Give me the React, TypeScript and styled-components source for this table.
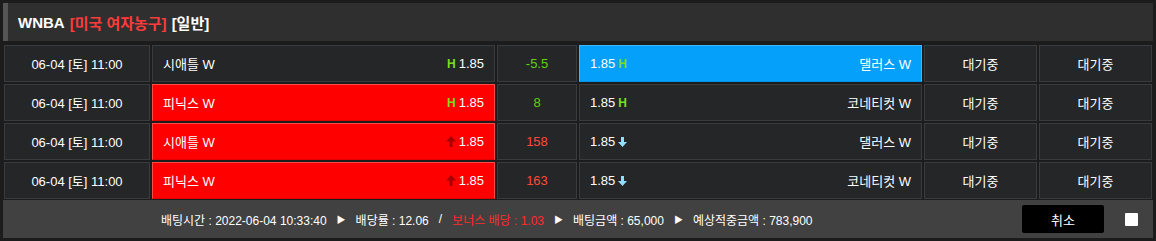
import styled, { createGlobalStyle } from "styled-components";
import { ReactElement } from "react";

const GlobalStyle = createGlobalStyle`
  html, body {
    margin: 0;
    padding: 0;
    background: #1c1c1c;
    font-family: "Liberation Sans", "Noto Sans CJK KR", sans-serif;
    font-size: 13px;
    color: #fff;
  }
`;

const Wrap = styled.div`
  width: 1150px;
  padding: 3px;
`;

const Header = styled.div`
  height: 38px;
  background: #2f2f2f;
  border-left: 5px solid #555;
  box-sizing: border-box;
  display: flex;
  align-items: center;
  padding-left: 10px;
  font-size: 15px;
  font-weight: 700;
  gap: 5px;

  .red {
    color: #ff3b3b;
  }
`;

const Table = styled.div`
  margin-top: 4px;
  padding-left: 1px;
  display: flex;
  flex-direction: column;
  gap: 2px;
`;

const Row = styled.div`
  display: grid;
  grid-template-columns: 146px 343px 80px 343px 113px 113px;
  gap: 2px;
  height: 37px;
`;

type Tone = "none" | "red" | "blue";

const Cell = styled.div<{ $tone?: Tone }>`
  box-sizing: border-box;
  display: flex;
  align-items: center;
  justify-content: center;
  padding: 0 10px;
  border: 1px solid
    ${(p) => (p.$tone === "red" ? "#ff4a4a" : p.$tone === "blue" ? "#3fb6ff" : "#3a3b3d")};
  border-bottom-color: ${(p) => (p.$tone === "red" ? "#e00000" : p.$tone === "blue" ? "#0494e6" : "#3a3b3d")};
  background: ${(p) => (p.$tone === "red" ? "#ff0000" : p.$tone === "blue" ? "#05a0fa" : "#252628")};
  color: #fff;
  white-space: nowrap;
`;

const TeamCell = styled(Cell)`
  justify-content: space-between;
`;

const Odds = styled.span`
  display: inline-flex;
  align-items: center;
  gap: 3px;
`;

const HMark = styled.span`
  color: #7ddc1f;
  font-weight: 700;
  font-size: 12px;
`;

const Line = styled.span<{ $color: string }>`
  color: ${(p) => p.$color};
`;

const Footer = styled.div`
  margin-top: 1px;
  height: 38px;
  background: #414141;
  display: flex;
  align-items: center;
  padding-left: 158px;
  padding-right: 15px;
  white-space: nowrap;
  font-size: 12px;
`;

const Info = styled.span<{ $red?: boolean }>`
  color: ${(p) => (p.$red ? "#ff2a2a" : "#fff")};
`;

const Sep = styled.span<{ $small?: boolean }>`
  display: inline-block;
  margin: 0 10px;
  font-size: ${(p) => (p.$small ? "9px" : "12px")};
`;

const CancelButton = styled.button`
  margin-left: auto;
  width: 82px;
  height: 28px;
  background: #000;
  border: none;
  border-radius: 2px;
  color: #fff;
  font-family: inherit;
  font-size: 13px;
  cursor: pointer;
`;

const Check = styled.span`
  margin-left: 21px;
  width: 13px;
  height: 13px;
  background: #fff;
  border-radius: 1px;
`;

const UpArrow = (): ReactElement => (
  <svg width="10" height="11" viewBox="0 0 10 11">
    <path d="M5 0 L10 5.5 L6.5 5.5 L6.5 11 L3.5 11 L3.5 5.5 L0 5.5 Z" fill="#a80000" />
  </svg>
);

const DownArrow = (): ReactElement => (
  <svg width="9" height="10" viewBox="0 0 9 10">
    <path d="M3 0 L6 0 L6 5 L9 5 L4.5 10 L0 5 L3 5 Z" fill="#8ee0ff" />
  </svg>
);

type Mark = "h" | "up" | "down";

interface Game {
  home: string;
  away: string;
  line: string;
  lineColor: string;
  mark: Mark;
  pick: "home" | "away";
}

const games: Game[] = [
  { home: "시애틀 W", away: "댈러스 W", line: "-5.5", lineColor: "#5fd40c", mark: "h", pick: "away" },
  { home: "피닉스 W", away: "코네티컷 W", line: "8", lineColor: "#5fd40c", mark: "h", pick: "home" },
  { home: "시애틀 W", away: "댈러스 W", line: "158", lineColor: "#ff4a3a", mark: "up", pick: "home" },
  { home: "피닉스 W", away: "코네티컷 W", line: "163", lineColor: "#ff4a3a", mark: "up", pick: "home" },
];

const HomeMark = ({ mark }: { mark: Mark }): ReactElement =>
  mark === "h" ? <HMark>H</HMark> : <UpArrow />;

const AwayMark = ({ mark }: { mark: Mark }): ReactElement =>
  mark === "h" ? <HMark>H</HMark> : <DownArrow />;

export default function App(): ReactElement {
  return (
    <>
      <GlobalStyle />
      <Wrap>
        <Header>
          <span>WNBA</span>
          <span className="red">[미국 여자농구]</span>
          <span>[일반]</span>
        </Header>
        <Table>
          {games.map((g, i) => (
            <Row key={i}>
              <Cell>06-04 [토] 11:00</Cell>
              <TeamCell $tone={g.pick === "home" ? "red" : "none"}>
                <span>{g.home}</span>
                <Odds>
                  <HomeMark mark={g.mark} />
                  1.85
                </Odds>
              </TeamCell>
              <Cell>
                <Line $color={g.lineColor}>{g.line}</Line>
              </Cell>
              <TeamCell $tone={g.pick === "away" ? "blue" : "none"}>
                <Odds>
                  1.85
                  <AwayMark mark={g.mark === "up" ? "down" : "h"} />
                </Odds>
                <span>{g.away}</span>
              </TeamCell>
              <Cell>대기중</Cell>
              <Cell>대기중</Cell>
            </Row>
          ))}
        </Table>
        <Footer>
          <Info>배팅시간 : 2022-06-04 10:33:40</Info>
          <Sep $small>▶</Sep>
          <Info>배당률 : 12.06</Info>
          <Sep>/</Sep>
          <Info $red>보너스 배당 : 1.03</Info>
          <Sep $small>▶</Sep>
          <Info>배팅금액 : 65,000</Info>
          <Sep $small>▶</Sep>
          <Info>예상적중금액 : 783,900</Info>
          <CancelButton>취소</CancelButton>
          <Check />
        </Footer>
      </Wrap>
    </>
  );
}
